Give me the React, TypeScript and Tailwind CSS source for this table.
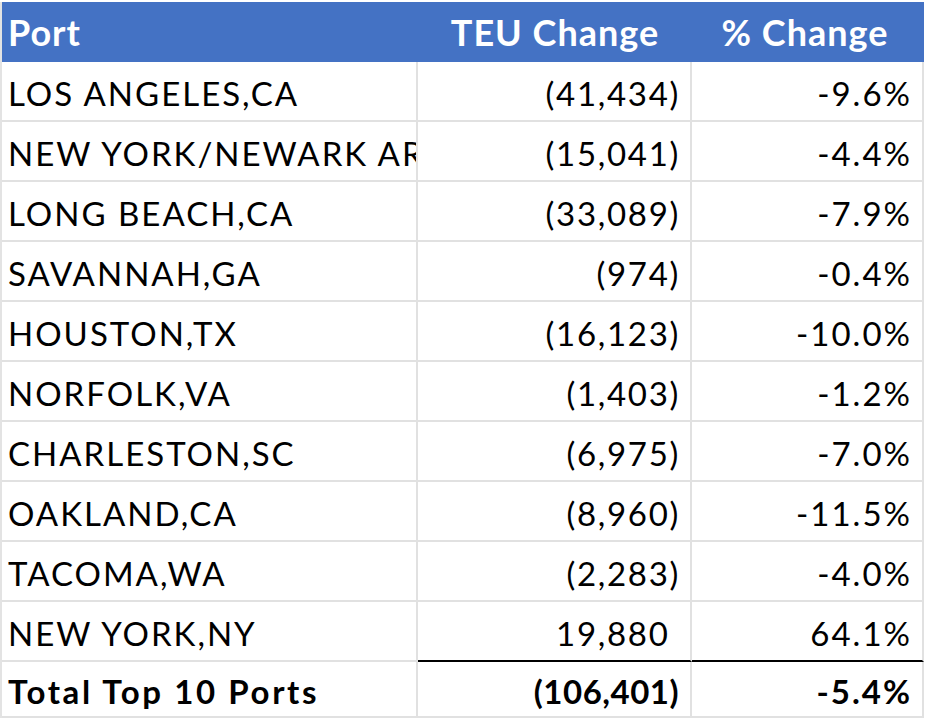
const rows = [
  { port: "LOS ANGELES,CA", teu: "(41,434)", pct: "-9.6%" },
  { port: "NEW YORK/NEWARK AREA,NJ", teu: "(15,041)", pct: "-4.4%" },
  { port: "LONG BEACH,CA", teu: "(33,089)", pct: "-7.9%" },
  { port: "SAVANNAH,GA", teu: "(974)", pct: "-0.4%" },
  { port: "HOUSTON,TX", teu: "(16,123)", pct: "-10.0%" },
  { port: "NORFOLK,VA", teu: "(1,403)", pct: "-1.2%" },
  { port: "CHARLESTON,SC", teu: "(6,975)", pct: "-7.0%" },
  { port: "OAKLAND,CA", teu: "(8,960)", pct: "-11.5%" },
  { port: "TACOMA,WA", teu: "(2,283)", pct: "-4.0%" },
  { port: "NEW YORK,NY", teu: "19,880", pct: "64.1%" },
];

export default function App() {
  return (
    <div className="w-[926px] h-[720px] overflow-hidden bg-white pt-[2px] font-['Lato',sans-serif] text-black">
      <div className="w-[924px] border-l-2 border-[#e3e3e3]">
        {/* Header */}
        <div className="grid grid-cols-[416px_274px_232px] h-[60px] bg-[#4472c4] text-white font-bold text-[36px] leading-none tracking-[1px]">
          <div className="flex items-center pl-[6px]">Port</div>
          <div className="flex items-center justify-center">TEU Change</div>
          <div className="flex items-center justify-center pr-[6px]">% Change</div>
        </div>

        {/* Port rows */}
        {rows.map((r, i) => {
          const last = i === rows.length - 1;
          return (
            <div
              key={r.port}
              className="grid grid-cols-[416px_274px_232px] h-[60px] text-[33px] leading-none"
            >
              <div className="flex items-center pl-[6px] pt-[4px] overflow-hidden whitespace-nowrap tracking-[2px] border-r-2 border-b-2 border-[#e1e1e1]">
                {r.port}
              </div>
              <div
                className={
                  "flex items-center justify-end pr-[10px] pt-[4px] tracking-[1.7px] border-r-2 border-b-2 " +
                  (last ? "border-r-[#e1e1e1] border-b-black" : "border-[#e1e1e1]")
                }
              >
                {r.teu}
                {!r.teu.startsWith("(") && <span className="invisible">)</span>}
              </div>
              <div
                className={
                  "flex items-center justify-end pr-[10px] pt-[4px] tracking-[2px] border-r-2 border-b-2 " +
                  (last ? "border-r-[#e1e1e1] border-b-black" : "border-[#e1e1e1]")
                }
              >
                {r.pct}
              </div>
            </div>
          );
        })}

        {/* Total */}
        <div className="grid grid-cols-[416px_274px_232px] h-[56px] text-[33px] leading-none font-bold">
          <div className="flex items-center pl-[6px] pt-[4px] tracking-[2.6px] border-r-2 border-b-2 border-[#e1e1e1]">
            Total Top 10 Ports
          </div>
          <div className="flex items-center justify-end pr-[11px] pt-[4px] tracking-[0.5px] border-r-2 border-b-2 border-[#e1e1e1]">
            (106,401)
          </div>
          <div className="flex items-center justify-end pr-[10px] pt-[4px] tracking-[2px] border-r-2 border-b-2 border-[#e1e1e1]">
            -5.4%
          </div>
        </div>
      </div>
    </div>
  );
}
